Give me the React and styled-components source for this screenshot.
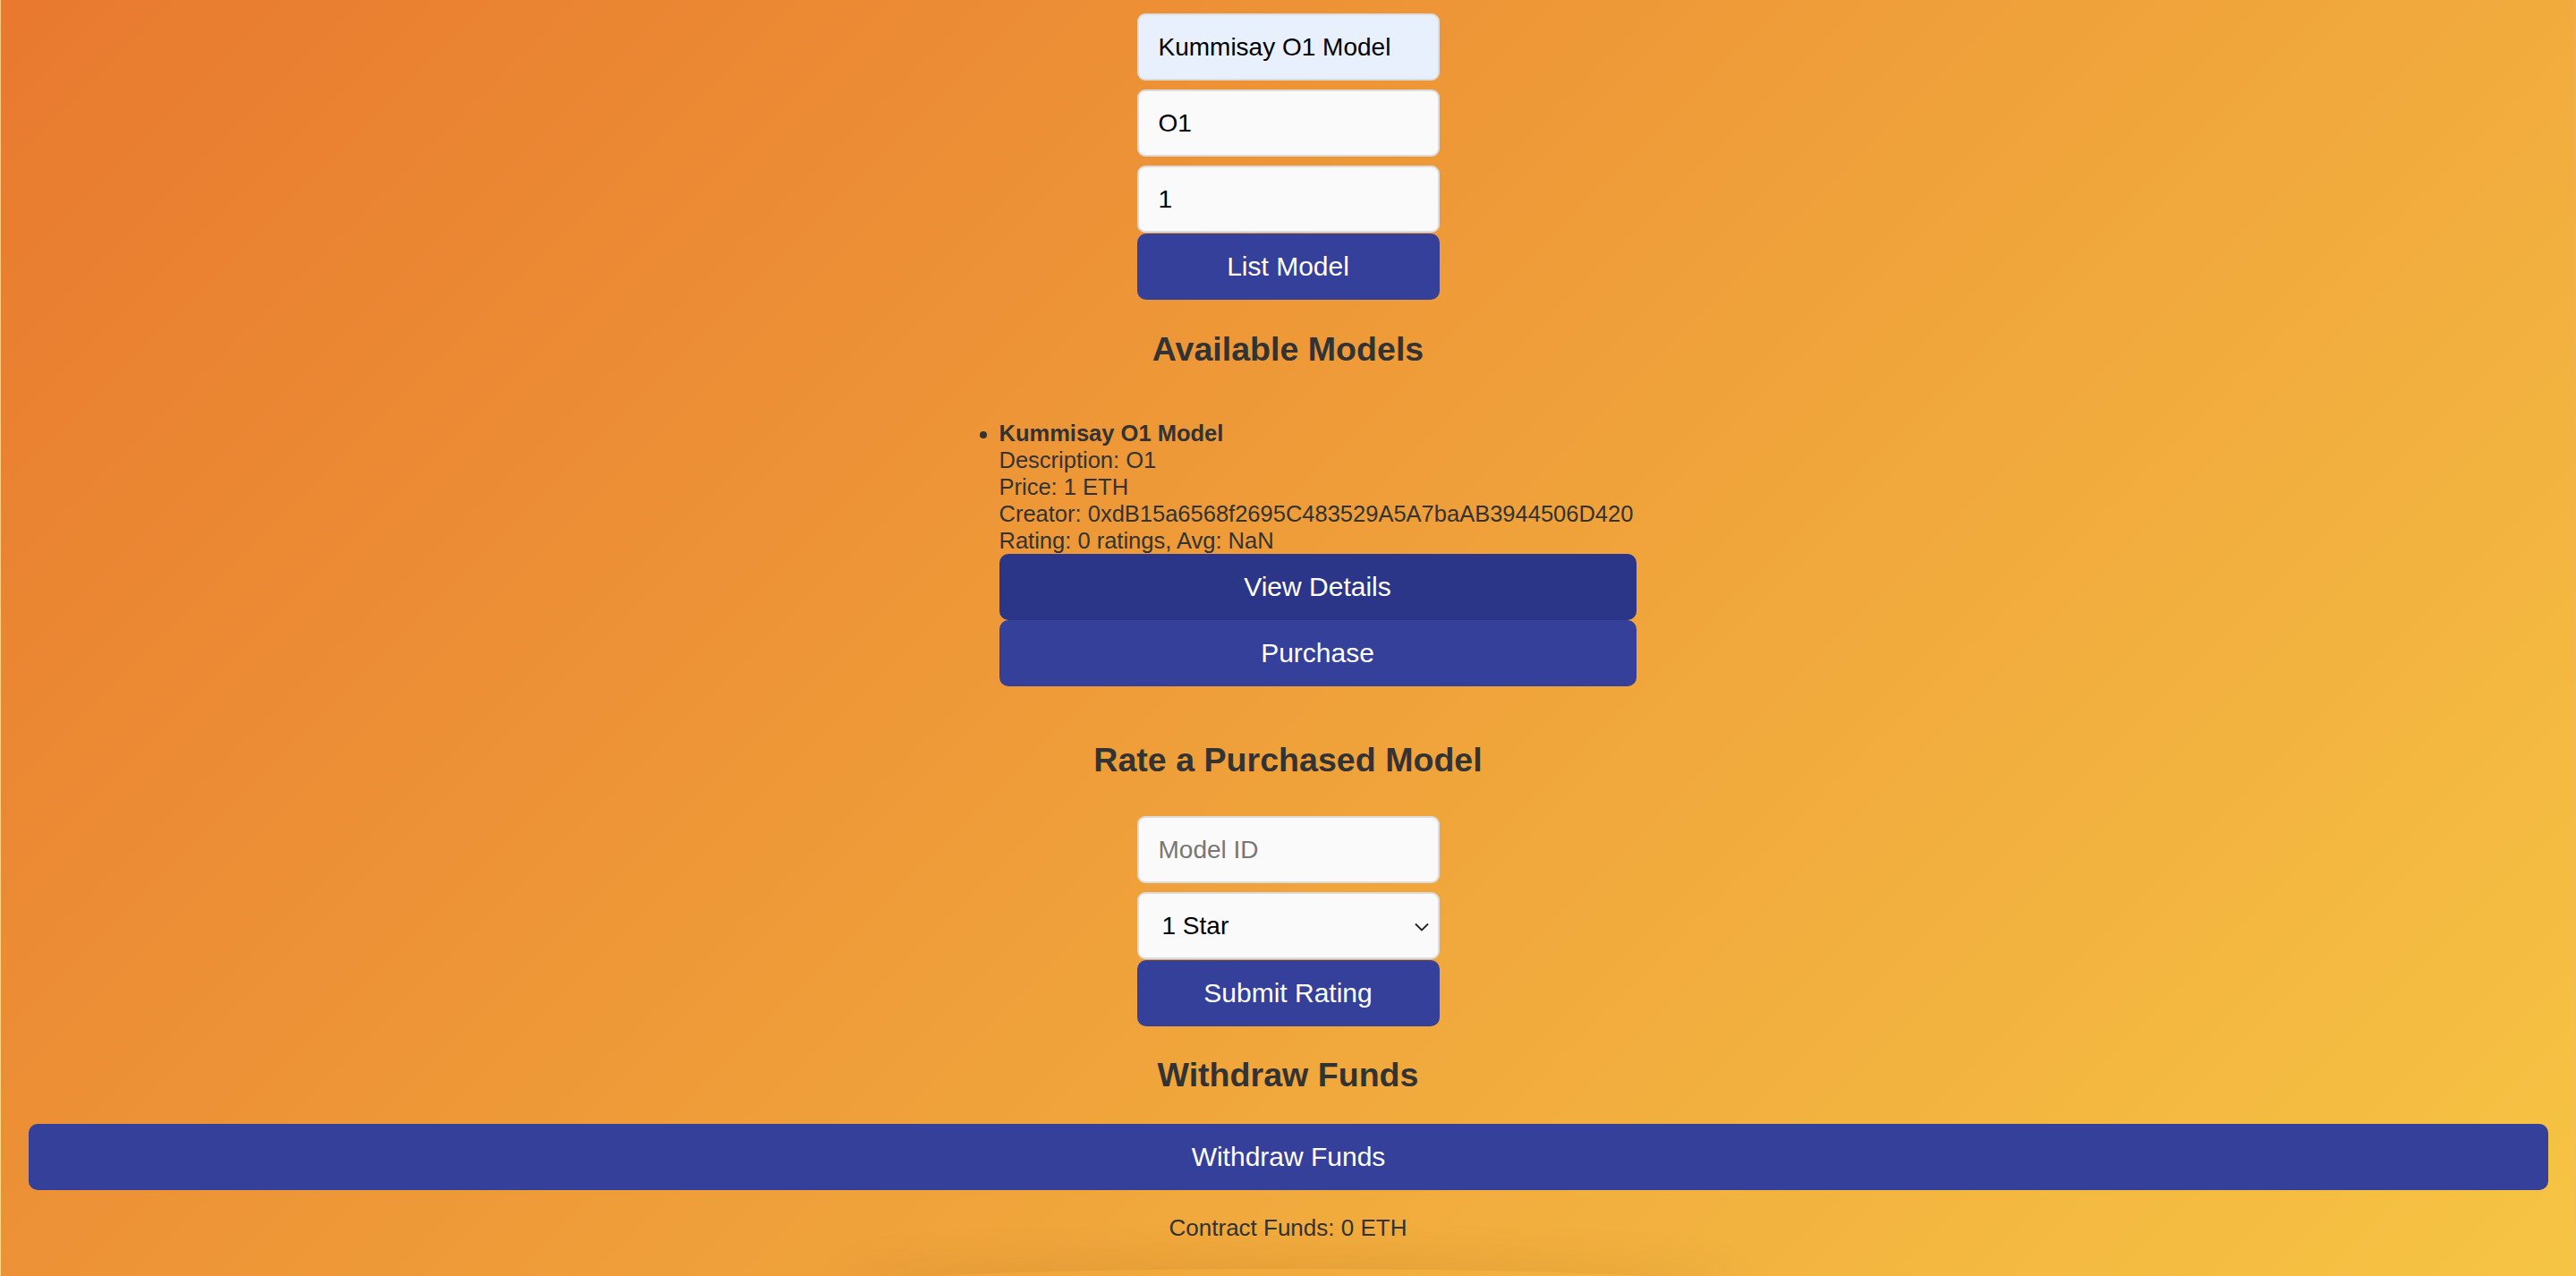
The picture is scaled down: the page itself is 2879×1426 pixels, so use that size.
import styled, { createGlobalStyle } from "styled-components";

const GlobalStyle = createGlobalStyle`
  html, body {
    margin: 0;
    padding: 0;
  }
  body {
    font-family: "Liberation Sans", Arial, Helvetica, sans-serif;
  }
`;

const Page = styled.div`
  min-height: 100vh;
  box-sizing: border-box;
  background: linear-gradient(135deg, #e8792f 0%, #f6c544 100%);
  border-left: 1px solid rgba(255, 255, 255, 0.35);
  border-right: 1px solid rgba(255, 255, 255, 0.35);
  padding-top: 15px;
  display: flex;
  flex-direction: column;
  align-items: center;
  color: #333;
  overflow: hidden;
`;

const Form = styled.div`
  display: flex;
  flex-direction: column;
  width: 338px;
  margin-top: ${(p) => p.$mt || 0}px;
`;

const Input = styled.input`
  box-sizing: border-box;
  width: 100%;
  height: 75px;
  margin: 0 0 ${(p) => (p.$tight ? 1 : 10)}px;
  padding: 0 22px;
  border: 2px solid #dcdcdc;
  border-radius: 9px;
  background: ${(p) => (p.$autofill ? "#e8f0fe" : "#fafafa")};
  font-family: "Liberation Sans", Arial, sans-serif;
  font-size: 28px;
  color: #000;
  outline: none;

  &::placeholder {
    color: #777;
  }
`;

const SelectWrap = styled.div`
  position: relative;
  margin-bottom: 1px;
`;

const Select = styled.select`
  box-sizing: border-box;
  width: 100%;
  height: 75px;
  padding: 0 40px 0 26px;
  border: 2px solid #dcdcdc;
  border-radius: 9px;
  background: #fafafa;
  font-family: "Liberation Sans", Arial, sans-serif;
  font-size: 28px;
  color: #000;
  appearance: none;
  outline: none;
`;

const Chevron = styled.svg`
  position: absolute;
  right: 11px;
  top: 50%;
  margin-top: -4px;
  pointer-events: none;
`;

const Button = styled.button`
  display: block;
  box-sizing: border-box;
  width: 100%;
  height: 74px;
  border: none;
  border-radius: 10px;
  background: ${(p) => (p.$hover ? "#2c3688" : "#35409a")};
  color: #fff;
  font-family: "Liberation Sans", Arial, sans-serif;
  font-size: 30px;
  cursor: pointer;
`;

const Heading = styled.h3`
  margin: ${(p) => p.$mt}px 0 0;
  font-size: 37.6px;
  line-height: 42px;
  font-weight: 700;
  color: #333;
  text-align: center;
`;

const ModelList = styled.ul`
  box-sizing: border-box;
  width: 778px;
  margin: 58px 0 0;
  padding-left: 66px;
  list-style: disc;
`;

const ModelCard = styled.li`
  width: 712px;
  font-size: 25.5px;
  line-height: 30px;
  color: #333;
`;

const Line = styled.div`
  font-weight: ${(p) => (p.$bold ? 700 : 400)};
  white-space: nowrap;
`;

const WithdrawRow = styled.div`
  align-self: stretch;
  margin: 34px 30px 0 31px;
`;

const Funds = styled.p`
  margin: 26px 0 0;
  font-size: 26px;
  line-height: 32px;
  color: #333;
`;

const Shade = styled.div`
  width: 1000px;
  height: 40px;
  margin-top: 30px;
  border-radius: 50%;
  box-shadow: 0 -4px 50px rgba(120, 60, 0, 0.14);
`;

const models = [
  {
    name: "Kummisay O1 Model",
    description: "O1",
    price: "1",
    creator: "0xdB15a6568f2695C483529A5A7baAB3944506D420",
    ratings: 0,
  },
];

const App = () => {
  return (
    <>
      <GlobalStyle />
      <Page>
        <Form>
          <Input $autofill defaultValue="Kummisay O1 Model" />
          <Input defaultValue="O1" />
          <Input $tight defaultValue="1" />
          <Button>List Model</Button>
        </Form>

        <Heading $mt={34}>Available Models</Heading>
        <ModelList>
          {models.map((m) => (
            <ModelCard key={m.name}>
              <Line $bold>{m.name}</Line>
              <Line>Description: {m.description}</Line>
              <Line>Price: {m.price} ETH</Line>
              <Line>Creator: {m.creator}</Line>
              <Line>Rating: {m.ratings} ratings, Avg: NaN</Line>
              <Button $hover>View Details</Button>
              <Button>Purchase</Button>
            </ModelCard>
          ))}
        </ModelList>

        <Heading $mt={61}>Rate a Purchased Model</Heading>
        <Form $mt={42}>
          <Input placeholder="Model ID" />
          <SelectWrap>
            <Select defaultValue="1">
              <option value="1">1 Star</option>
              <option value="2">2 Stars</option>
              <option value="3">3 Stars</option>
              <option value="4">4 Stars</option>
              <option value="5">5 Stars</option>
            </Select>
            <Chevron width="18" height="10" viewBox="0 0 18 10">
              <path d="M2 1.5l7 7 7-7" fill="none" stroke="#222" strokeWidth="1.8" />
            </Chevron>
          </SelectWrap>
          <Button>Submit Rating</Button>
        </Form>

        <Heading $mt={33}>Withdraw Funds</Heading>
        <WithdrawRow>
          <Button>Withdraw Funds</Button>
        </WithdrawRow>
        <Funds>Contract Funds: 0 ETH</Funds>
        <Shade />
      </Page>
    </>
  );
};

export default App;
